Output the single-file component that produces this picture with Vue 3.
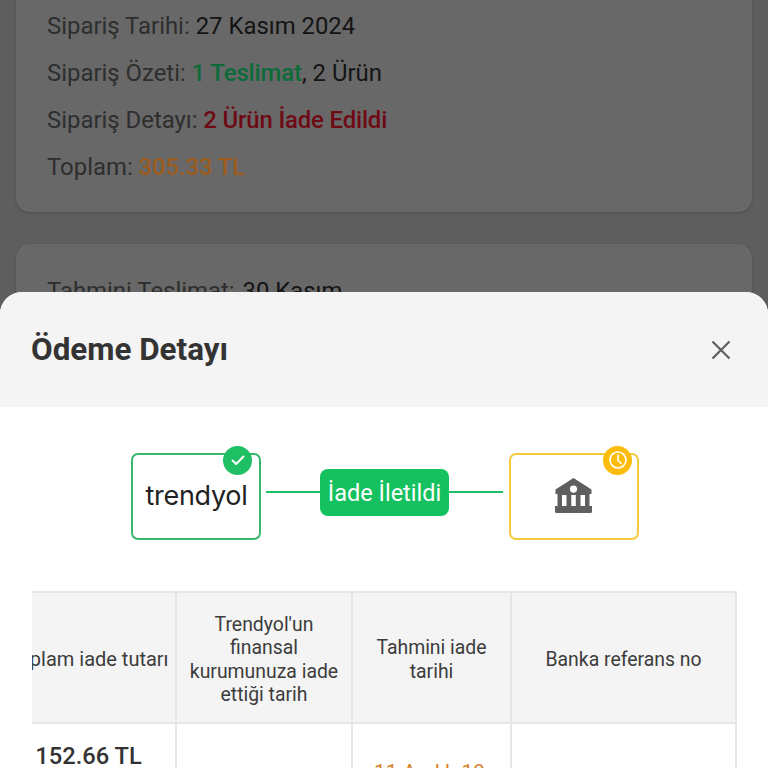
<script setup>
const orderRows = [
  { label: 'Sipariş Tarihi:', parts: [{ t: ' 27 Kasım 2024', c: 'dark' }] },
  { label: 'Sipariş Özeti:', parts: [{ t: ' 1 Teslimat', c: 'green' }, { t: ', 2 Ürün', c: 'dark' }] },
  { label: 'Sipariş Detayı:', parts: [{ t: ' 2 Ürün İade Edildi', c: 'red' }] },
  { label: 'Toplam:', parts: [{ t: ' 305.33 TL', c: 'orange' }] },
]
</script>

<template>
  <div class="screen">
    <div class="page">
      <section class="card first">
        <p v-for="row in orderRows" :key="row.label" class="line">
          <span class="label">{{ row.label }}</span><span v-for="p in row.parts" :key="p.t" :class="p.c">{{ p.t }}</span>
        </p>
      </section>
      <section class="card second">
        <p class="line"><span class="label">Tahmini Teslimat:</span><span class="dark wide"> 30 Kasım</span></p>
      </section>
    </div>

    <div class="sheet">
      <header class="sheet-head">
        <h2>Ödeme Detayı</h2>
        <svg class="close" width="20" height="20" viewBox="0 0 20 20" fill="none" stroke="#5f5f5f" stroke-width="2.2">
          <path d="M1.5 1.5 18.5 18.5M18.5 1.5 1.5 18.5" />
        </svg>
      </header>

      <div class="flow">
        <div class="node ok">
          <span class="logo">trendyol</span>
          <span class="badge badge-green">
            <svg width="16" height="16" viewBox="0 0 16 16" fill="none" stroke="#fff" stroke-width="2" stroke-linecap="round" stroke-linejoin="round"><path d="M2.5 8.5 6.2 12 13.5 4.5" /></svg>
          </span>
        </div>
        <div class="wire wire-a"></div>
        <div class="pill">İade İletildi</div>
        <div class="wire wire-b"></div>
        <div class="node wait">
          <svg class="bank" width="37" height="35" viewBox="0 0 37 35" fill="#5f5f5f">
            <path fill-rule="evenodd" d="M18.5 0 36.5 11.5V16H34.5V28H37V33.5Q37 35 35.5 35H1.5Q0 35 0 33.5V28H2.5V16H.5V11.5ZM18.5 7.5a3.6 3.6 0 1 0 0 7.2 3.6 3.6 0 0 0 0-7.2ZM7 17H11.5V28H7ZM16.3 17H20.8V28H16.3ZM25.5 17H30V28H25.5Z" />
          </svg>
          <span class="badge badge-yellow">
            <svg width="20" height="20" viewBox="0 0 20 20" fill="none" stroke="#fff" stroke-width="1.6" stroke-linecap="round" stroke-linejoin="round"><circle cx="10" cy="10" r="8" /><path d="M10 5v5.3l3 3" /></svg>
          </span>
        </div>
      </div>

      <div class="table-clip">
        <div class="table">
          <div class="cell head c1">Toplam iade tutarı</div>
          <div class="cell head c2">Trendyol'un finansal kurumunuza iade ettiği tarih</div>
          <div class="cell head c3">Tahmini iade tarihi</div>
          <div class="cell head c4">Banka referans no</div>
          <div class="cell body c1 amount">152.66 TL</div>
          <div class="cell body c2"></div>
          <div class="cell body c3 date">11 Aralık-19 Aralık</div>
          <div class="cell body c4"></div>
        </div>
      </div>
    </div>
  </div>
</template>

<style scoped>
.screen {
  position: relative;
  width: 768px;
  height: 768px;
  overflow: hidden;
  background: #5e5e5e;
  font-family: Roboto, "Liberation Sans", sans-serif;
}
.page {
  display: flex;
  flex-direction: column;
  gap: 32px;
  padding: 0 16px;
}
.card {
  background: #686868;
  border-radius: 14px;
  box-shadow: 0 1px 3px rgba(0, 0, 0, 0.18);
  padding: 0 31px;
}
.first {
  height: 231px;
  margin-top: -19px;
  padding-top: 22px;
  box-sizing: border-box;
}
.second {
  height: 200px;
  padding-top: 24px;
}
.line {
  margin: 0;
  height: 47px;
  line-height: 47px;
  font-size: 23.9px;
  white-space: pre;
}
.label { color: #2e2e2e; }
.dark { color: #141414; }
.wide { margin-left: 2px; }
.green { color: #0d6b38; font-weight: 500; letter-spacing: -0.1px; }
.red { color: #6e0a14; font-weight: 500; letter-spacing: -0.15px; }
.orange { color: #9c5c20; font-weight: 500; letter-spacing: -0.1px; }

.sheet {
  position: absolute;
  left: 0;
  right: 0;
  top: 292px;
  bottom: 0;
  background: #fff;
  border-radius: 22px 22px 0 0;
  overflow: hidden;
}
.sheet-head {
  height: 115px;
  background: #f4f4f4;
  display: flex;
  align-items: center;
  justify-content: space-between;
  padding: 0 37px 0 31px;
  box-sizing: border-box;
}
.sheet-head h2 {
  margin: 0;
  font-size: 31.4px;
  font-weight: 700;
  color: #333;
}

.flow {
  display: flex;
  align-items: center;
  margin: 45px 0 0 131px;
  height: 88px;
}
.node {
  position: relative;
  box-sizing: border-box;
  display: flex;
  align-items: center;
  justify-content: center;
  width: 130px;
  height: 87px;
  border-radius: 7px;
  border: 2px solid;
  background: #fff;
}
.ok { border-color: #37b96c; }
.wait { border-color: #f4ca3e; }
.bank { margin-right: 1px; margin-bottom: 1px; }
.logo {
  font-family: Inter, Lato, sans-serif;
  font-size: 27px;
  color: #222;
  letter-spacing: -0.3px;
  margin: 0 0 2px 1px;
}
.badge {
  position: absolute;
  top: -9px;
  width: 29px;
  height: 29px;
  border-radius: 50%;
  display: flex;
  align-items: center;
  justify-content: center;
}
.badge-green { right: 7px; background: #1fbf63; }
.badge-yellow { right: 5px; background: #fdbc0c; }
.wire,
.pill { margin-bottom: 8px; }
.wire {
  height: 2px;
  background: #1fbf63;
}
.wire-a { width: 54px; margin-left: 5px; }
.wire-b { width: 54px; margin-right: 6px; }
.pill {
  box-sizing: border-box;
  width: 129px;
  height: 47px;
  padding-top: 2px;
  border-radius: 8px;
  background: #14c15e;
  color: #fff;
  font-size: 23.5px;
  display: flex;
  align-items: center;
  justify-content: center;
}

.table-clip {
  margin: 51px 0 0 32px;
  width: 705px;
  overflow: hidden;
}
.table {
  display: grid;
  grid-template-columns: 181px 176px 159px 225px;
  grid-template-rows: 131px 120px;
  margin-left: -36px;
  border-top: 2px solid #e6e6e6;
}
.cell {
  box-sizing: border-box;
  border-right: 2px solid #e6e6e6;
  border-bottom: 2px solid #e6e6e6;
  padding: 0 10px;
  text-align: center;
  display: flex;
  align-items: center;
  justify-content: center;
}
.head {
  background: #f4f4f4;
  color: #3c3c3c;
  font-size: 19.4px;
  line-height: 23.5px;
  padding-top: 4px;
}
.head.c1 {
  white-space: nowrap;
  font-size: 20px;
  padding-left: 5px;
  padding-right: 0;
}
.body { background: #fff; }
.amount {
  align-items: flex-start;
  padding: 18px 0 0 6px;
  font-size: 23.7px;
  font-weight: 500;
  color: #333;
}
.date {
  align-items: flex-start;
  padding: 37px 12px 0 8px;
  font-size: 21px;
  line-height: 23.5px;
  color: #d9822b;
}
</style>
